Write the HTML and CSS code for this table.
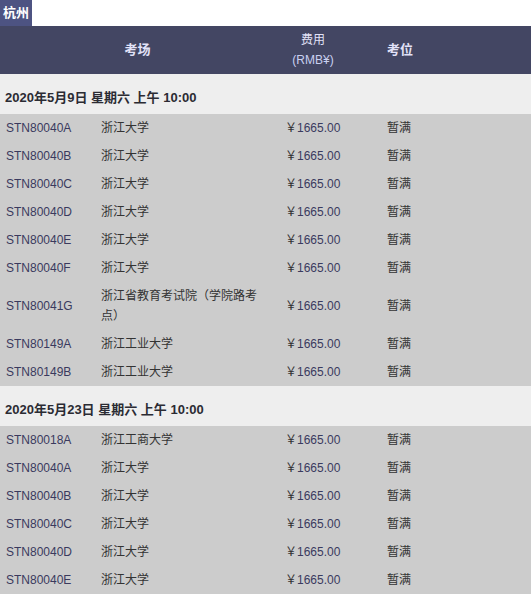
FILE: index.html
```html
<!DOCTYPE html>
<html lang="zh-CN">
<head>
<meta charset="utf-8">
<title>杭州考场</title>
<link rel="stylesheet" href="styles.css">
</head>
<body>
<div class="city">杭州</div>
<div class="sheet">
  <div class="head">
    <div class="h-site">考场</div>
    <div class="h-fee">费用<br><span class="unit">(RMB¥)</span></div>
    <div class="h-seat">考位</div>
    <div></div>
  </div>

  <div class="date">2020年5月9日 星期六 上午 10:00</div>
  <div class="rows">
    <div class="row"><span class="code">STN80040A</span><span>浙江大学</span><span class="fee">￥<span class="num">1665.00</span></span><span>暂满</span></div>
    <div class="row"><span class="code">STN80040B</span><span>浙江大学</span><span class="fee">￥<span class="num">1665.00</span></span><span>暂满</span></div>
    <div class="row"><span class="code">STN80040C</span><span>浙江大学</span><span class="fee">￥<span class="num">1665.00</span></span><span>暂满</span></div>
    <div class="row"><span class="code">STN80040D</span><span>浙江大学</span><span class="fee">￥<span class="num">1665.00</span></span><span>暂满</span></div>
    <div class="row"><span class="code">STN80040E</span><span>浙江大学</span><span class="fee">￥<span class="num">1665.00</span></span><span>暂满</span></div>
    <div class="row"><span class="code">STN80040F</span><span>浙江大学</span><span class="fee">￥<span class="num">1665.00</span></span><span>暂满</span></div>
    <div class="row"><span class="code">STN80041G</span><span>浙江省教育考试院（学院路考点）</span><span class="fee">￥<span class="num">1665.00</span></span><span>暂满</span></div>
    <div class="row"><span class="code">STN80149A</span><span>浙江工业大学</span><span class="fee">￥<span class="num">1665.00</span></span><span>暂满</span></div>
    <div class="row"><span class="code">STN80149B</span><span>浙江工业大学</span><span class="fee">￥<span class="num">1665.00</span></span><span>暂满</span></div>
  </div>

  <div class="date">2020年5月23日 星期六 上午 10:00</div>
  <div class="rows">
    <div class="row"><span class="code">STN80018A</span><span>浙江工商大学</span><span class="fee">￥<span class="num">1665.00</span></span><span>暂满</span></div>
    <div class="row"><span class="code">STN80040A</span><span>浙江大学</span><span class="fee">￥<span class="num">1665.00</span></span><span>暂满</span></div>
    <div class="row"><span class="code">STN80040B</span><span>浙江大学</span><span class="fee">￥<span class="num">1665.00</span></span><span>暂满</span></div>
    <div class="row"><span class="code">STN80040C</span><span>浙江大学</span><span class="fee">￥<span class="num">1665.00</span></span><span>暂满</span></div>
    <div class="row"><span class="code">STN80040D</span><span>浙江大学</span><span class="fee">￥<span class="num">1665.00</span></span><span>暂满</span></div>
    <div class="row"><span class="code">STN80040E</span><span>浙江大学</span><span class="fee">￥<span class="num">1665.00</span></span><span>暂满</span></div>
  </div>
</div>
</body>
</html>
```

FILE: styles.css
```css
html, body {
  margin: 0;
  padding: 0;
  background: #ffffff;
}

body {
  font-family: "Liberation Sans", Arial, "Noto Sans CJK SC", sans-serif;
  font-size: 12px;
  color: #333333;
}

.city {
  display: inline-block;
  background: #4d5382;
  color: #ffffff;
  font-weight: bold;
  font-size: 13px;
  line-height: 20px;
  padding: 3px 3px;
}

.sheet {
  width: 531px;
}

.head {
  display: grid;
  grid-template-columns: 275px 76px 98px 1fr;
  background: #434663;
  color: #e2e2f8;
  font-size: 13px;
  line-height: 20px;
  padding: 4px 0;
  align-items: center;
}

.h-site, .h-seat {
  font-weight: bold;
  text-align: center;
}

.h-fee {
  text-align: center;
  font-size: 12px;
}

.unit {
  color: #c9d0f0;
}

.date {
  background: #eeeeee;
  font-weight: bold;
  font-size: 13px;
  line-height: 20px;
  padding: 14px 5px 6px;
  color: #2b2b33;
}

.rows {
  background: #cccccc;
}

.row {
  display: grid;
  grid-template-columns: 95px 184px 102px 1fr;
  align-items: center;
  line-height: 20px;
}

.row > span {
  padding: 4px 6px;
}

.code, .num {
  color: #3a3a5e;
}

.fee {
  white-space: nowrap;
}
```
